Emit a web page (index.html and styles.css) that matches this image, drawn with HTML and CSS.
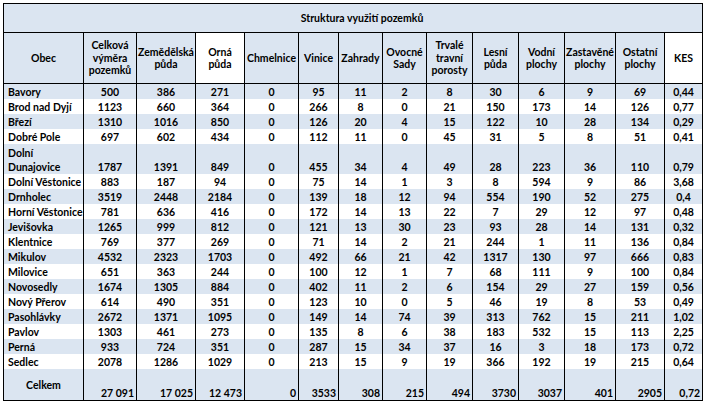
FILE: index.html
```html
<!DOCTYPE html>
<html lang="cs">
<head>
<meta charset="utf-8">
<title>Struktura využití pozemků</title>
<link rel="stylesheet" href="styles.css">
</head>
<body>
<div class="wrap">
<table class="grid">
<colgroup>
<col class="c-obec"><col class="c-celk"><col class="c-zem"><col class="c-orna"><col class="c-chm"><col class="c-vin"><col class="c-zah"><col class="c-ovo"><col class="c-trv"><col class="c-les"><col class="c-vod"><col class="c-zas"><col class="c-ost"><col class="c-kes">
</colgroup>
<thead>
<tr class="r-title"><th colspan="14" class="title blue"><span class="title-text">Struktura využití pozemků</span></th></tr>
<tr class="r-head">
<th class="blue">Obec</th>
<th class="blue">Celková výměra pozemků</th>
<th class="blue">Zemědělská půda</th>
<th class="white">Orná půda</th>
<th class="blue">Chmelnice</th>
<th class="blue">Vinice</th>
<th class="blue">Zahrady</th>
<th class="blue">Ovocné Sady</th>
<th class="blue">Trvalé travní porosty</th>
<th class="blue">Lesní půda</th>
<th class="blue">Vodní plochy</th>
<th class="blue">Zastavěné plochy</th>
<th class="blue">Ostatní plochy</th>
<th class="white">KES</th>
</tr>
</thead>
<tbody>
<tr class="blue"><td class="name">Bavory</td><td>500</td><td>386</td><td>271</td><td>0</td><td>95</td><td>11</td><td>2</td><td>8</td><td>30</td><td>6</td><td>9</td><td>69</td><td>0,44</td></tr>
<tr class="white"><td class="name">Brod nad Dyjí</td><td>1123</td><td>660</td><td>364</td><td>0</td><td>266</td><td>8</td><td>0</td><td>21</td><td>150</td><td>173</td><td>14</td><td>126</td><td>0,77</td></tr>
<tr class="blue"><td class="name">Březí</td><td>1310</td><td>1016</td><td>850</td><td>0</td><td>126</td><td>20</td><td>4</td><td>15</td><td>122</td><td>10</td><td>28</td><td>134</td><td>0,29</td></tr>
<tr class="white"><td class="name">Dobré Pole</td><td>697</td><td>602</td><td>434</td><td>0</td><td>112</td><td>11</td><td>0</td><td>45</td><td>31</td><td>5</td><td>8</td><td>51</td><td>0,41</td></tr>
<tr class="blue tall"><td class="name">Dolní<br>Dunajovice</td><td>1787</td><td>1391</td><td>849</td><td>0</td><td>455</td><td>34</td><td>4</td><td>49</td><td>28</td><td>223</td><td>36</td><td>110</td><td>0,79</td></tr>
<tr class="white"><td class="name">Dolní Věstonice</td><td>883</td><td>187</td><td>94</td><td>0</td><td>75</td><td>14</td><td>1</td><td>3</td><td>8</td><td>594</td><td>9</td><td>86</td><td>3,68</td></tr>
<tr class="blue"><td class="name">Drnholec</td><td>3519</td><td>2448</td><td>2184</td><td>0</td><td>139</td><td>18</td><td>12</td><td>94</td><td>554</td><td>190</td><td>52</td><td>275</td><td>0,4</td></tr>
<tr class="white"><td class="name">Horní Věstonice</td><td>781</td><td>636</td><td>416</td><td>0</td><td>172</td><td>14</td><td>13</td><td>22</td><td>7</td><td>29</td><td>12</td><td>97</td><td>0,48</td></tr>
<tr class="blue"><td class="name">Jevišovka</td><td>1265</td><td>999</td><td>812</td><td>0</td><td>121</td><td>13</td><td>30</td><td>23</td><td>93</td><td>28</td><td>14</td><td>131</td><td>0,32</td></tr>
<tr class="white"><td class="name">Klentnice</td><td>769</td><td>377</td><td>269</td><td>0</td><td>71</td><td>14</td><td>2</td><td>21</td><td>244</td><td>1</td><td>11</td><td>136</td><td>0,84</td></tr>
<tr class="blue"><td class="name">Mikulov</td><td>4532</td><td>2323</td><td>1703</td><td>0</td><td>492</td><td>66</td><td>21</td><td>42</td><td>1317</td><td>130</td><td>97</td><td>666</td><td>0,83</td></tr>
<tr class="white"><td class="name">Milovice</td><td>651</td><td>363</td><td>244</td><td>0</td><td>100</td><td>12</td><td>1</td><td>7</td><td>68</td><td>111</td><td>9</td><td>100</td><td>0,84</td></tr>
<tr class="blue"><td class="name">Novosedly</td><td>1674</td><td>1305</td><td>884</td><td>0</td><td>402</td><td>11</td><td>2</td><td>6</td><td>154</td><td>29</td><td>27</td><td>159</td><td>0,56</td></tr>
<tr class="white"><td class="name">Nový Přerov</td><td>614</td><td>490</td><td>351</td><td>0</td><td>123</td><td>10</td><td>0</td><td>5</td><td>46</td><td>19</td><td>8</td><td>53</td><td>0,49</td></tr>
<tr class="blue"><td class="name">Pasohlávky</td><td>2672</td><td>1371</td><td>1095</td><td>0</td><td>149</td><td>14</td><td>74</td><td>39</td><td>313</td><td>762</td><td>15</td><td>211</td><td>1,02</td></tr>
<tr class="white"><td class="name">Pavlov</td><td>1303</td><td>461</td><td>273</td><td>0</td><td>135</td><td>8</td><td>6</td><td>38</td><td>183</td><td>532</td><td>15</td><td>113</td><td>2,25</td></tr>
<tr class="blue"><td class="name">Perná</td><td>933</td><td>724</td><td>351</td><td>0</td><td>287</td><td>15</td><td>34</td><td>37</td><td>16</td><td>3</td><td>18</td><td>173</td><td>0,72</td></tr>
<tr class="white"><td class="name">Sedlec</td><td>2078</td><td>1286</td><td>1029</td><td>0</td><td>213</td><td>15</td><td>9</td><td>19</td><td>366</td><td>192</td><td>19</td><td>215</td><td>0,64</td></tr>
</tbody>
<tfoot>
<tr class="blue total"><td class="total-label">Celkem</td><td>27 091</td><td>17 025</td><td>12 473</td><td>0</td><td>3533</td><td>308</td><td>215</td><td>494</td><td>3730</td><td>3037</td><td>401</td><td>2905</td><td>0,72</td></tr>
</tfoot>
</table>
</div>
</body>
</html>
```

FILE: styles.css
```css
html, body {
  margin: 0;
  padding: 0;
  background: #ffffff;
}

.wrap {
  padding: 3px 0 0 3px;
}

.grid {
  border-collapse: collapse;
  table-layout: fixed;
  width: 700px;
  font-family: "Lato", "Liberation Sans", sans-serif;
  font-weight: bold;
  font-size: 10.5px;
  color: #000000;
  border: 1px solid #000000;
}

.c-obec { width: 80px; }
.c-celk { width: 53px; }
.c-zem { width: 59px; }
.c-orna { width: 49px; }
.c-chm { width: 54px; }
.c-vin { width: 40px; }
.c-zah { width: 44px; }
.c-ovo { width: 44px; }
.c-trv { width: 46px; }
.c-les { width: 46px; }
.c-vod { width: 46px; }
.c-zas { width: 51px; }
.c-ost { width: 49px; }
.c-kes { width: 38px; }

.blue { background: #dbe5f1; }
.white { background: #ffffff; }

.grid th {
  border: 1px solid #000000;
  font-weight: bold;
  text-align: center;
  vertical-align: middle;
  padding: 0 1px;
  line-height: 12.5px;
}

.r-title { height: 29px; }
.r-head { height: 51px; }

.title-text {
  display: inline-block;
  padding-left: 18px;
}

.grid td {
  border-left: 1px solid #000000;
  border-right: 1px solid #000000;
  padding: 0 2px;
  text-align: center;
  vertical-align: bottom;
  line-height: 14px;
  height: 15px;
  white-space: nowrap;
}

.grid tbody tr { height: 15px; }
.grid tbody tr.tall { height: 30px; }
.grid tbody tr.tall td { height: 30px; }

.grid td.name {
  text-align: left;
  padding-left: 4px;
}

.grid tr.total td {
  height: 31px;
  text-align: right;
  padding-right: 2px;
  border-bottom: 1px solid #000000;
}

.grid tr.total td.total-label {
  text-align: center;
  vertical-align: middle;
}
```
